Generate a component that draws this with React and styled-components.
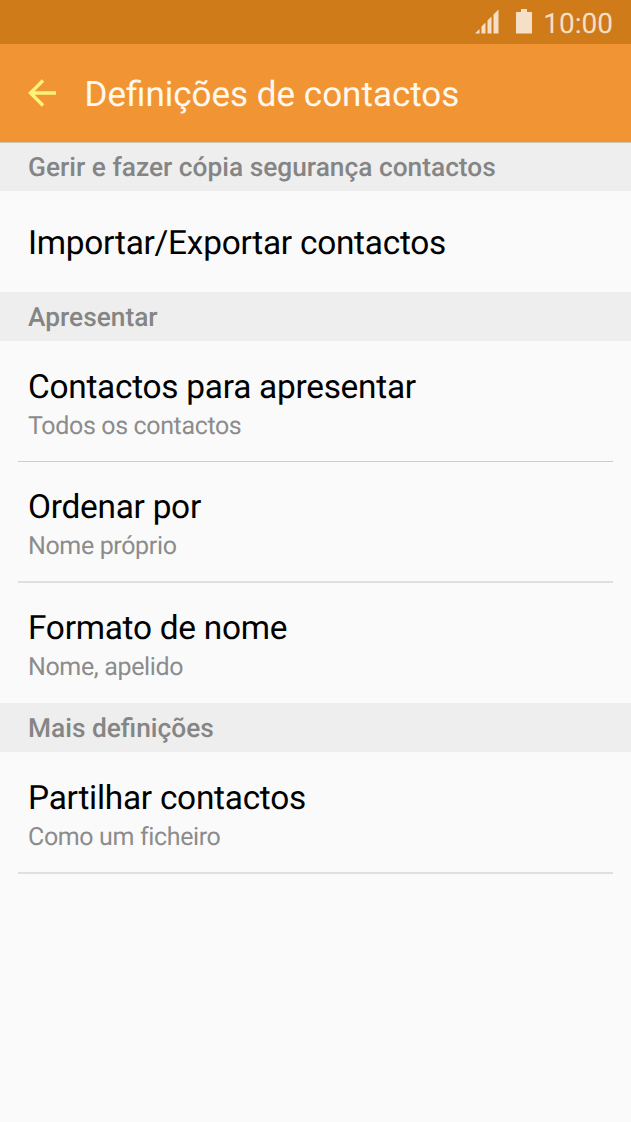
import React from "react";
import styled, { createGlobalStyle } from "styled-components";

const GlobalStyle = createGlobalStyle`
  body {
    margin: 0;
    background: #fafafa;
  }
`;
const Screen = styled.div`
  display: flex;
  flex-direction: column;
  min-height: 1122px;
  background: #fafafa;
  font-family: Roboto, "Liberation Sans", sans-serif;
  text-rendering: geometricPrecision;
  overflow: hidden;
`;
const StatusBar = styled.div`
  display: flex;
  align-items: center;
  justify-content: flex-end;
  gap: 17px;
  box-sizing: border-box;
  height: 44px;
  padding-right: 18px;
  background: #d07b1a;
`;
const Clock = styled.span`
  margin-left: -6px;
  padding-top: 3px;
  font-size: 28px;
  line-height: 43px;
  color: #f5dfc6;
`;
const Header = styled.header`
  display: flex;
  align-items: center;
  box-sizing: border-box;
  height: 98px;
  padding-left: 28px;
  background: #f19534;
`;
const BackButton = styled.button`
  display: flex;
  padding: 0;
  margin: 0 27.5px 0 0;
  border: none;
  background: transparent;
`;
const Title = styled.h1`
  margin: 0;
  padding-top: 3px;
  font-size: 35px;
  font-weight: 400;
  line-height: 42px;
  color: #fff8ee;
  white-space: nowrap;
`;
const SectionTitle = styled.h2`
  box-sizing: border-box;
  height: 49px;
  margin: 0;
  padding: 2px 28px 0;
  background: #eeeeee;
  color: #858585;
  font-size: 26.3px;
  font-weight: 500;
  line-height: 49px;
  white-space: nowrap;
`;
const List = styled.main`
  border-top: 1px solid #cfc4b2;
  margin-bottom: -1px;

  section:first-child h2 {
    height: 48px;
    padding-top: 1px;
  }
`;
const Row = styled.div`
  display: flex;
  flex-direction: column;
  justify-content: center;
  box-sizing: border-box;
  height: ${props => props.$height}px;
  margin: 0 18px;
  padding: ${props => (props.$tall ? "11px" : "6px")} 10px 0;
  border-bottom: ${props => (props.$thin ? "1px" : "2px")} solid
    ${props => props.$line || "transparent"};
`;
const Label = styled.div`
  font-size: 33.4px;
  letter-spacing: -0.26px;
  line-height: 40px;
  color: #000;
  white-space: nowrap;
`;
const Value = styled.div`
  font-size: 25px;
  letter-spacing: -0.36px;
  line-height: 38px;
  color: #8c8c8c;
  white-space: nowrap;
`;

const sections = [
  {
    title: "Gerir e fazer cópia segurança contactos",
    rows: [{ label: "Importar/Exportar contactos", height: 101 }]
  },
  {
    title: "Apresentar",
    rows: [
      { label: "Contactos para apresentar", value: "Todos os contactos", height: 121, line: "#cdcdcd", thin: true },
      { label: "Ordenar por", value: "Nome próprio", height: 121, line: "#dfdfdf" },
      { label: "Formato de nome", value: "Nome, apelido", height: 120 }
    ]
  },
  {
    title: "Mais definições",
    rows: [{ label: "Partilhar contactos", value: "Como um ficheiro", height: 122, line: "#dfdfdf" }]
  }
];

const SignalIcon = () => (
  <svg width="24" height="26" viewBox="0 0 24 26" fill="#f5dfc6">
    <path d="M0 24.5l4.5-4.5v4.5zM6.5 24.5v-7l4-4v11zM12.5 24.5v-13l4-4v17zM18.5 24.5v-19l5-5v24z" />
  </svg>
);

const BatteryIcon = () => (
  <svg width="16" height="26" viewBox="0 0 16 26" fill="#f5dfc6">
    <path d="M5 0h6v3h5v21.5H0V3h5z" />
  </svg>
);

const BackIcon = () => (
  <svg width="29" height="28" viewBox="0 0 29 28" fill="none" stroke="#fff27a" strokeWidth="3.4">
    <path d="M15 1.5L2.5 14 15 26.5M2.5 14H28" />
  </svg>
);

const App = () => (
  <Screen>
    <GlobalStyle />
    <StatusBar>
      <SignalIcon />
      <BatteryIcon />
      <Clock>10:00</Clock>
    </StatusBar>
    <Header>
      <BackButton type="button" aria-label="Voltar">
        <BackIcon />
      </BackButton>
      <Title>Definições de contactos</Title>
    </Header>
    <List>
      {sections.map(section => (
        <section key={section.title}>
          <SectionTitle>{section.title}</SectionTitle>
          {section.rows.map(row => (
            <Row
              key={row.label}
              $height={row.height}
              $line={row.line}
              $thin={row.thin}
              $tall={!!row.value}
            >
              <Label>{row.label}</Label>
              {row.value && <Value>{row.value}</Value>}
            </Row>
          ))}
        </section>
      ))}
    </List>
  </Screen>
);

export default App;
